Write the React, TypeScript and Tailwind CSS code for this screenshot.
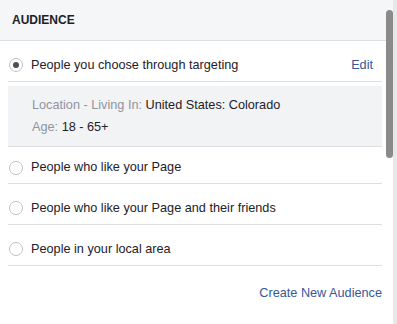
import React from "react";

const font = { fontFamily: '"Liberation Sans", Arial, sans-serif' };

function Radio({ checked }: { checked?: boolean }) {
  return (
    <span className="mt-[1px] flex h-[14px] w-[14px] shrink-0 items-center justify-center rounded-full border border-[#bec3c9] bg-white">
      {checked && <span className="h-[6px] w-[6px] rounded-full bg-[#4b4f56]" />}
    </span>
  );
}

function Option({ label, checked, className }: { label: string; checked?: boolean; className: string }) {
  return (
    <div className={`flex items-center border-b border-[#dddfe2] pl-[1px] ${className}`}>
      <Radio checked={checked} />
      <span className="ml-[8px] pt-[2px] text-[12.7px] text-[#1d2129]">{label}</span>
    </div>
  );
}

export default function App() {
  return (
    <div className="relative flex h-[324px] w-[397px] bg-white" style={font}>
      <div className="flex w-[393px] flex-col">
        <div className="flex h-[41px] items-center border-b border-[#dddfe2] bg-[#f5f6f7] pl-[12px]">
          <span className="text-[12px] font-bold text-[#1d2129]">AUDIENCE</span>
        </div>

        <div className="flex w-[390px] flex-col px-[8px]">
          <div className="mt-[7px] flex h-[34px] items-center justify-between border-b border-[#dddfe2] pl-[1px]">
            <div className="flex items-center">
              <Radio checked />
              <span className="ml-[8px] pt-[2px] text-[12.7px] text-[#1d2129]">People you choose through targeting</span>
            </div>
            <span className="mr-[9px] pt-[2px] text-[12.7px] text-[#365899]">Edit</span>
          </div>

          <div className="mt-[4px] flex h-[61px] flex-col justify-center gap-[3px] border-b border-[#dddfe2] bg-[#f2f3f5] pl-[24px] pt-[1px] text-[12.7px] leading-[19px]">
            <div>
              <span className="text-[#90949c]">Location - Living In: </span>
              <span className="text-[#1d2129]">United States: Colorado</span>
            </div>
            <div>
              <span className="text-[#90949c]">Age: </span>
              <span className="text-[#1d2129]">18 - 65+</span>
            </div>
          </div>

          <Option label="People who like your Page" className="h-[37px] pt-[4px]" />
          <Option label="People who like your Page and their friends" className="mt-[7px] h-[34px]" />
          <Option label="People in your local area" className="mt-[7px] h-[34px]" />

          <div className="mt-[18px] flex justify-end">
            <span className="text-[12.7px] text-[#365899]">Create New Audience</span>
          </div>
        </div>
      </div>
      <div className="w-[4px] bg-[#e8e8e8]" />
      <div className="absolute left-[386px] top-[10px] h-[148px] w-[7px] rounded-full bg-[#8a8a8a]" />
    </div>
  );
}
